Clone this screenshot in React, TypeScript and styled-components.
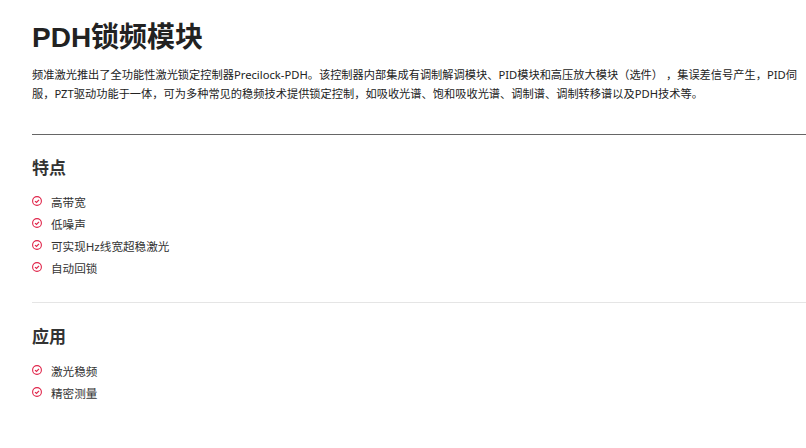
import React from "react";
import styled, { createGlobalStyle } from "styled-components";

const Global = createGlobalStyle`
  html, body { margin: 0; padding: 0; background: #fff; overflow: hidden; }
  body { font-family: "Noto Sans", "Noto Sans CJK SC", sans-serif; color: #333; }
`;
const Page = styled.main`
  width: 806px;
  height: 448px;
  padding: 19px 0 0 32px;
  box-sizing: border-box;
  overflow: hidden;
`;
const Title = styled.h1`
  margin: 0;
  font-family: "Liberation Sans", "Noto Sans CJK SC", sans-serif;
  font-size: 28px;
  line-height: 38px;
  font-weight: 700;
  color: #222;
`;
const Intro = styled.p`
  margin: 8px 0 0;
  width: 770px;
  font-size: 11.22px;
  line-height: 19px;
  color: #222;
`;
const Rule = styled.hr<{ $light?: boolean }>`
  margin: 0;
  border: 0;
  height: 1px;
  background: ${(p) => (p.$light ? "#e5e5e5" : "#666")};
`;
const HeavyRule = styled(Rule)`
  margin-top: 31px;
`;
const Section = styled.section<{ $top: number }>`
  padding: ${(p) => p.$top}px 0 0;
`;
const Heading = styled.h2`
  margin: 0;
  font-family: "Liberation Sans", "Noto Sans CJK SC", sans-serif;
  font-size: 17px;
  line-height: 24px;
  font-weight: 700;
  color: #333;
`;
const List = styled.ul`
  list-style: none;
  margin: 10px 0 0;
  padding: 0;
  display: flex;
  flex-direction: column;
`;
const Item = styled.li`
  display: flex;
  align-items: center;
  gap: 9px;
  height: 22px;
  font-size: 11.6px;
  color: #333;
`;
const Check = styled.svg`
  width: 10px;
  height: 10px;
  flex: none;
  margin-top: -2px;
`;
const Divider = styled(Rule)`
  margin-top: 23px;
`;

const CheckIcon = () => (
  <Check viewBox="0 0 10 10" fill="none" stroke="#e0254a">
    <circle cx="5" cy="5" r="4.4" strokeWidth="1.1" />
    <path d="M3 5.1 4.5 6.5 7 3.8" strokeWidth="1.2" />
  </Check>
);

const features = ["高带宽", "低噪声", "可实现Hz线宽超稳激光", "自动回锁"];
const uses = ["激光稳频", "精密测量"];

export default function App() {
  return (
    <Page>
      <Global />
      <Title>PDH锁频模块</Title>
      <Intro>
        频准激光推出了全功能性激光锁定控制器Precilock-PDH。该控制器内部集成有调制解调模块、PID模块和高压放大模块（选件）&nbsp;，集误差信号产生，PID伺服，PZT驱动功能于一体，可为多种常见的稳频技术提供锁定控制，如吸收光谱、饱和吸收光谱、调制谱、调制转移谱以及PDH技术等。
      </Intro>
      <HeavyRule />
      <Section $top={22}>
        <Heading>特点</Heading>
        <List>
          {features.map((t) => (
            <Item key={t}>
              <CheckIcon />
              {t}
            </Item>
          ))}
        </List>
        <Divider $light />
      </Section>
      <Section $top={23}>
        <Heading>应用</Heading>
        <List>
          {uses.map((t) => (
            <Item key={t}>
              <CheckIcon />
              {t}
            </Item>
          ))}
        </List>
      </Section>
    </Page>
  );
}
